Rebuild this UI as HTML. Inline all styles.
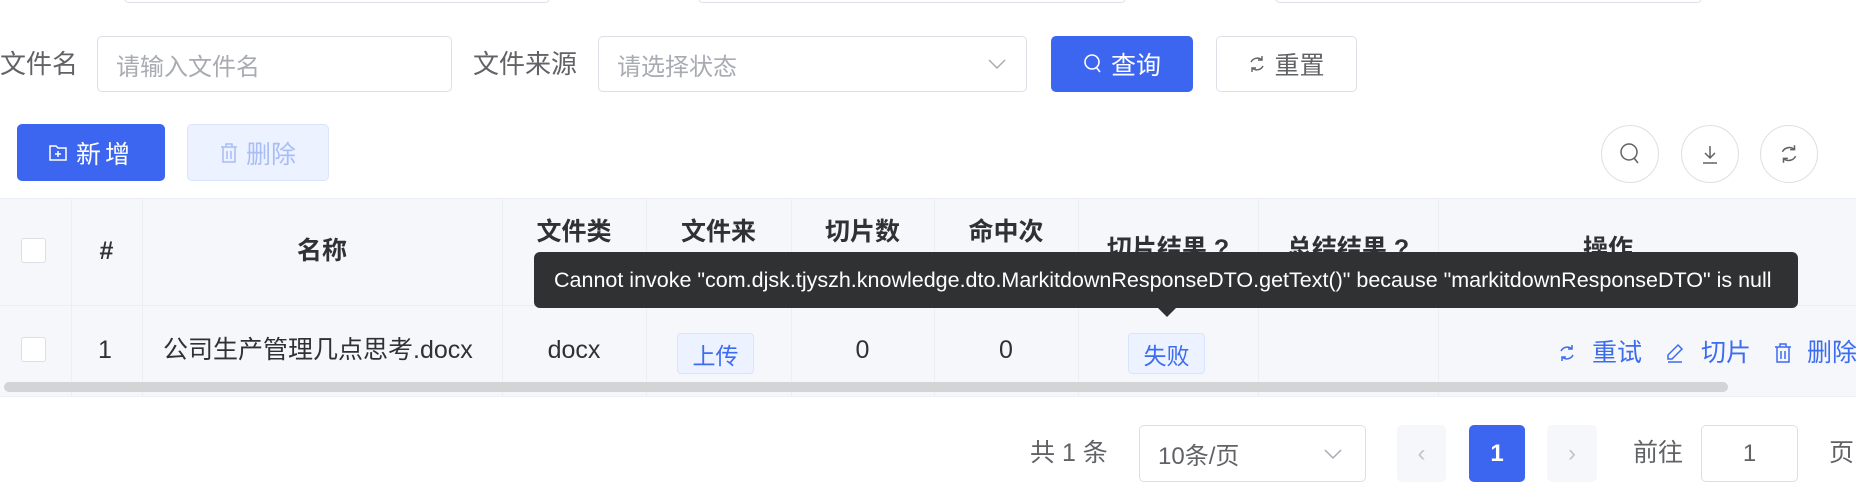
<!DOCTYPE html>
<html><head><meta charset="utf-8"><style>
*{box-sizing:border-box;margin:0;padding:0}
body{width:1856px;height:484px;overflow:hidden;background:#fff;font-family:"Liberation Sans","Noto Sans CJK SC",sans-serif;color:#303133;position:relative}
.a{position:absolute}
.inp{position:absolute;border:1.5px solid #dcdfe6;border-radius:5px;background:#fff;color:#a8abb2;font-size:24px;display:flex;align-items:center;padding-left:18px}
.lbl{position:absolute;font-size:26px;line-height:30px;color:#606266}
.btn{position:absolute;border-radius:5px;display:flex;align-items:center;justify-content:center;font-size:25px;gap:8px}
.circ{position:absolute;width:58px;height:58px;border:1.5px solid #dcdfe6;border-radius:50%;display:flex;align-items:center;justify-content:center}
.th{position:absolute;font-size:25px;line-height:30px;font-weight:bold;color:#303133;text-align:center}
.td{position:absolute;font-size:25px;line-height:30px;color:#303133;white-space:nowrap}
.vl{position:absolute;top:198px;height:198px;width:1px;background:#ebeef5}
.tag{position:absolute;background:#ecf2ff;border:1px solid #d9e4fd;border-radius:4px;color:#3c6cf0;font-size:23px;display:flex;align-items:center;justify-content:center}
.cb{position:absolute;width:25px;height:25px;border:1.5px solid #dcdfe6;border-radius:3px;background:#fff}
.op{position:absolute;color:#3c6cf0;font-size:25px;line-height:30px;top:338px;white-space:nowrap}
.ic{position:absolute;top:343px}
</style></head><body>
<div class="a" style="left:124px;top:-10px;width:426px;height:13px;border:1.5px solid #dcdfe6;border-radius:5px"></div>
<div class="a" style="left:698px;top:-10px;width:428px;height:13px;border:1.5px solid #dcdfe6;border-radius:5px"></div>
<div class="a" style="left:1275px;top:-10px;width:427px;height:13px;border:1.5px solid #dcdfe6;border-radius:5px"></div>

<div class="lbl" style="left:0;top:49px">文件名</div>
<div class="inp" style="left:97px;top:36px;width:355px;height:56px">请输入文件名</div>
<div class="lbl" style="left:473px;top:49px">文件来源</div>
<div class="inp" style="left:598px;top:36px;width:429px;height:56px">请选择状态
<svg class="a" style="left:388px;top:20px" width="20" height="14" viewBox="0 0 20 14"><path d="M2 3l8 8 8-8" fill="none" stroke="#a8abb2" stroke-width="1.5"/></svg></div>
<div class="btn" style="left:1051px;top:36px;width:142px;height:56px;background:#3c66f0;color:#fff">
<svg width="20" height="24" viewBox="0 0 20 22"><circle cx="9" cy="9" r="7" fill="none" stroke="#fff" stroke-width="1.6"/><path d="M13 14l4 5" stroke="#fff" stroke-width="1.6"/></svg>查询</div>
<div class="btn" style="left:1216px;top:36px;width:141px;height:56px;border:1.5px solid #dcdfe6;color:#606266">
<svg width="18" height="20" viewBox="0 0 18 20"><path d="M14 6A7 7 0 0 0 3 8M4 14a7 7 0 0 0 11-2" fill="none" stroke="#606266" stroke-width="1.4"/><path d="M14 2v4h-4M4 18v-4h4" fill="none" stroke="#606266" stroke-width="1.4"/></svg>重置</div>

<div class="btn" style="left:17px;top:124px;width:148px;height:57px;background:#3c66f0;color:#fff;letter-spacing:4px">
<svg width="20" height="20" viewBox="0 0 20 20"><path d="M2 3h6l2 2h8v12H2z" fill="none" stroke="#fff" stroke-width="1.5"/><path d="M10 8v6M7 11h6" stroke="#fff" stroke-width="1.5"/></svg>新增</div>
<div class="btn" style="left:187px;top:124px;width:142px;height:57px;background:#ecf2ff;border:1px solid #d9e4fd;color:#a9bdf6">
<svg width="18" height="20" viewBox="0 0 18 20"><path d="M1 4h16M6 4V1h6v3M3 4v15h12V4M7 8v8M11 8v8" fill="none" stroke="#a9bdf6" stroke-width="1.5"/></svg>删除</div>

<div class="circ" style="left:1601px;top:125px"><svg width="24" height="26" viewBox="0 0 24 26"><circle cx="11" cy="11" r="8" fill="none" stroke="#606266" stroke-width="1.5"/><path d="M16 17l4 5" stroke="#606266" stroke-width="1.5"/></svg></div>
<div class="circ" style="left:1681px;top:125px"><svg width="22" height="22" viewBox="0 0 22 22"><path d="M11 3v12M6 10l5 5 5-5M4 20h14" fill="none" stroke="#606266" stroke-width="1.5"/></svg></div>
<div class="circ" style="left:1760px;top:125px"><svg width="20" height="22" viewBox="0 0 18 20"><path d="M14 6A7 7 0 0 0 3 8M4 14a7 7 0 0 0 11-2" fill="none" stroke="#606266" stroke-width="1.4"/><path d="M14 2v4h-4M4 18v-4h4" fill="none" stroke="#606266" stroke-width="1.4"/></svg></div>

<div class="a" style="left:0;top:198px;width:1856px;height:198px;background:#f5f7fa"></div>
<div class="a" style="left:0;top:198px;width:1856px;height:1px;background:#ebeef5"></div>
<div class="a" style="left:0;top:305px;width:1856px;height:1px;background:#ebeef5"></div>
<div class="a" style="left:0;top:396px;width:1856px;height:1px;background:#ebeef5"></div>
<div class="vl" style="left:71px"></div><div class="vl" style="left:142px"></div><div class="vl" style="left:502px"></div><div class="vl" style="left:646px"></div><div class="vl" style="left:791px"></div><div class="vl" style="left:934px"></div><div class="vl" style="left:1078px"></div><div class="vl" style="left:1258px"></div><div class="vl" style="left:1438px"></div>
<div class="cb" style="left:21px;top:238px"></div>
<div class="th" style="left:71px;width:71px;top:236px">#</div>
<div class="th" style="left:142px;width:360px;top:236px">名称</div>
<div class="th" style="left:502px;width:144px;top:217px">文件类</div>
<div class="th" style="left:646px;width:145px;top:217px">文件来</div>
<div class="th" style="left:791px;width:143px;top:217px">切片数</div>
<div class="th" style="left:934px;width:144px;top:217px">命中次</div>
<div class="th" style="left:1078px;width:180px;top:234px">切片结果 ?</div>
<div class="th" style="left:1258px;width:180px;top:234px">总结结果 ?</div>
<div class="th" style="left:1438px;width:340px;top:234px">操作</div>

<div class="cb" style="left:21px;top:337px"></div>
<div class="td" style="left:98px;top:335px">1</div>
<div class="td" style="left:163px;top:335px">公司生产管理几点思考.docx</div>
<div class="td" style="left:502px;width:144px;text-align:center;top:335px">docx</div>
<div class="tag" style="left:677px;top:333px;width:77px;height:41px">上传</div>
<div class="td" style="left:791px;width:143px;text-align:center;top:335px">0</div>
<div class="td" style="left:934px;width:144px;text-align:center;top:335px">0</div>
<div class="tag" style="left:1128px;top:333px;width:77px;height:41px">失败</div>
<svg class="ic" style="left:1558px" width="18" height="20" viewBox="0 0 18 20"><path d="M14 6A7 7 0 0 0 3 8M4 14a7 7 0 0 0 11-2" fill="none" stroke="#3c6cf0" stroke-width="1.5"/><path d="M14 2v4h-4M4 18v-4h4" fill="none" stroke="#3c6cf0" stroke-width="1.5"/></svg>
<div class="op" style="left:1592px">重试</div>
<svg class="ic" style="left:1665px" width="20" height="20" viewBox="0 0 20 20"><path d="M13 2l4 4-10 10H3v-4zM3 19h14" fill="none" stroke="#3c6cf0" stroke-width="1.5"/></svg>
<div class="op" style="left:1701px">切片</div>
<svg class="ic" style="left:1774px" width="18" height="20" viewBox="0 0 18 20"><path d="M1 4h16M6 4V1h6v3M3 4v15h12V4M7 8v8M11 8v8" fill="none" stroke="#3c6cf0" stroke-width="1.5"/></svg>
<div class="op" style="left:1807px">删除</div>
<div class="a" style="left:4px;top:382px;width:1724px;height:10px;border-radius:5px;background:#d3d4d6"></div>

<div class="a" style="left:534px;top:252px;width:1264px;height:56px;background:#303133;border-radius:6px;color:#fff;font-size:21.5px;display:flex;align-items:center;padding-left:20px;white-space:nowrap">Cannot invoke "com.djsk.tjyszh.knowledge.dto.MarkitdownResponseDTO.getText()" because "markitdownResponseDTO" is null</div>
<div class="a" style="left:1157px;top:307px;width:0;height:0;border-left:10px solid transparent;border-right:10px solid transparent;border-top:10px solid #303133"></div>

<div class="td" style="left:1030px;top:438px;color:#606266">共 1 条</div>
<div class="inp" style="left:1139px;top:425px;width:227px;height:57px;color:#606266">10条/页
<svg class="a" style="left:183px;top:21px" width="20" height="14" viewBox="0 0 20 14"><path d="M2 3l8 8 8-8" fill="none" stroke="#a8abb2" stroke-width="1.5"/></svg></div>
<div class="btn" style="left:1397px;top:425px;width:49px;height:57px;background:#f5f7fa;color:#c0c4cc;font-size:24px">‹</div>
<div class="btn" style="left:1469px;top:425px;width:56px;height:57px;background:#3c66f0;color:#fff;font-weight:bold;font-size:24px">1</div>
<div class="btn" style="left:1547px;top:425px;width:50px;height:57px;background:#f5f7fa;color:#c0c4cc;font-size:24px">›</div>
<div class="td" style="left:1633px;top:438px;color:#606266">前往</div>
<div class="inp" style="left:1701px;top:425px;width:97px;height:57px;color:#606266;justify-content:center;padding:0">1</div>
<div class="td" style="left:1829px;top:438px;color:#606266">页</div>
</body></html>
